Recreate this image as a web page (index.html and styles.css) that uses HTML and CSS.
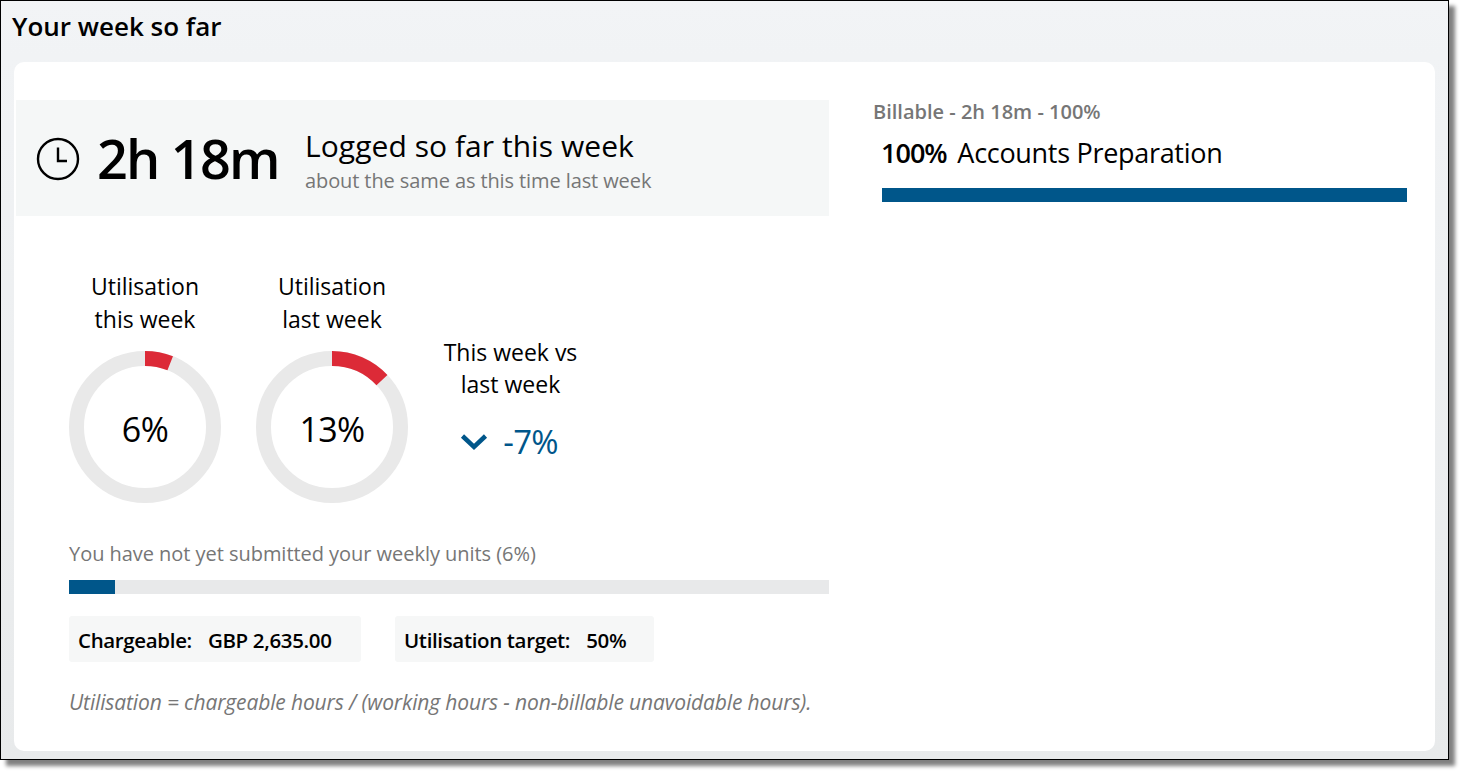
FILE: index.html
```html
<!DOCTYPE html>
<html lang="en">
<head>
    <meta charset="UTF-8">
    <title>Your week so far</title>
    <link rel="stylesheet" href="styles.css">
</head>
<body>
    <div class="frame">
        <h1 class="page-title">Your week so far</h1>
        <div class="card">
            <div class="left-col">
                <div class="hero">
                    <svg class="clock" viewBox="0 0 44 44" width="44" height="44">
                        <circle cx="22" cy="22" r="20" fill="none" stroke="#000" stroke-width="2.4"></circle>
                        <path d="M22 10.5V24H31" fill="none" stroke="#000" stroke-width="2.4"></path>
                    </svg>
                    <div class="hero-time">2h 18m</div>
                    <div class="hero-text">
                        <div class="hero-title">Logged so far this week</div>
                        <div class="hero-sub">about the same as this time last week</div>
                    </div>
                </div>

                <div class="gauges">
                    <div class="gauge">
                        <div class="gauge-label">Utilisation<br>this week</div>
                        <div class="ring">
                            <svg viewBox="0 0 152 152" width="152" height="152">
                                <circle class="ring-bg" cx="76" cy="76" r="68.5"></circle>
                                <circle class="ring-value" cx="76" cy="76" r="68.5" pathLength="100" stroke-dasharray="6 94" transform="rotate(-90 76 76)"></circle>
                            </svg>
                            <span class="ring-text">6%</span>
                        </div>
                    </div>
                    <div class="gauge">
                        <div class="gauge-label">Utilisation<br>last week</div>
                        <div class="ring">
                            <svg viewBox="0 0 152 152" width="152" height="152">
                                <circle class="ring-bg" cx="76" cy="76" r="68.5"></circle>
                                <circle class="ring-value" cx="76" cy="76" r="68.5" pathLength="100" stroke-dasharray="13 87" transform="rotate(-90 76 76)"></circle>
                            </svg>
                            <span class="ring-text">13%</span>
                        </div>
                    </div>
                    <div class="compare">
                        <div class="gauge-label">This week vs<br>last week</div>
                        <div class="compare-value">
                            <svg viewBox="0 0 28 18" width="28" height="18">
                                <path d="M2.5 3L14 14L25.5 3" fill="none" stroke="#00568a" stroke-width="4.5"></path>
                            </svg>
                            <span>-7%</span>
                        </div>
                    </div>
                </div>

                <div class="units">
                    <div class="units-label">You have not yet submitted your weekly units (6%)</div>
                    <div class="track"><div class="track-fill" style="width: 6%"></div></div>
                    <div class="chips">
                        <div class="chip chip-money"><b>Chargeable:</b><span>GBP 2,635.00</span></div>
                        <div class="chip chip-target"><b>Utilisation target:</b><span>50%</span></div>
                    </div>
                    <div class="note">Utilisation = chargeable hours / (working hours - non-billable unavoidable hours).</div>
                </div>
            </div>

            <div class="right-col">
                <div class="billable-label">Billable - 2h 18m - 100%</div>
                <div class="billable-row"><b>100%</b> Accounts Preparation</div>
                <div class="billable-bar"></div>
            </div>
        </div>
    </div>
</body>
</html>
```

FILE: styles.css
```css
html, body {
    margin: 0;
    padding: 0;
}
body {
    width: 1464px;
    height: 775px;
    background: #fff;
    font-family: "Open Sans", "Noto Sans", sans-serif;
    color: #000;
    overflow: hidden;
}
.frame {
    box-sizing: border-box;
    width: 1449px;
    height: 760px;
    padding: 0 13px;
    border: 1px solid #000;
    background: linear-gradient(#f2f4f6, #f1f3f5 55px, #e8eaeb);
    box-shadow: 6px 6px 4px #808080;
}
.page-title {
    margin: 0 0 0 -2px;
    height: 61px;
    padding-top: 8px;
    box-sizing: border-box;
    font-size: 26px;
    line-height: 34px;
    font-weight: 600;
}
.card {
    display: flex;
    box-sizing: border-box;
    width: 1421px;
    height: 689px;
    padding-top: 38px;
    padding-left: 2px;
    background: #fff;
    border-radius: 10px;
}
.left-col {
    width: 813px;
}
.right-col {
    margin-left: 44px;
    width: 534px;
}
.hero {
    display: flex;
    align-items: center;
    height: 116px;
    background: #f5f7f7;
    padding-left: 20px;
    box-sizing: border-box;
}
.clock {
    flex: none;
    margin-top: 1px;
}
.hero-time {
    margin-left: 17px;
    width: 208px;
    font-size: 54px;
    line-height: 60px;
    font-weight: 600;
    letter-spacing: -1.8px;
    white-space: nowrap;
}
.hero-text {
    margin-top: 5px;
}
.hero-title {
    font-size: 30px;
    line-height: 36px;
    letter-spacing: 0.05px;
}
.hero-sub {
    margin-top: 4px;
    font-size: 20px;
    line-height: 26px;
    color: #767676;
    letter-spacing: -0.1px;
}
.gauges {
    display: flex;
    margin-top: 54px;
    padding-left: 53px;
    height: 233px;
}
.gauge {
    width: 152px;
    margin-right: 35px;
    text-align: center;
}
.gauge-label {
    font-size: 23px;
    line-height: 33px;
    white-space: nowrap;
}
.ring {
    position: relative;
    width: 152px;
    height: 152px;
    margin-top: 15px;
}
.ring svg {
    display: block;
}
.ring-bg,
.ring-value {
    fill: none;
    stroke-width: 15;
}
.ring-bg {
    stroke: #e9e9e9;
}
.ring-value {
    stroke: #dc2a37;
}
.ring-text {
    position: absolute;
    left: 0;
    right: 0;
    top: 56px;
    font-size: 34px;
    line-height: 44px;
    letter-spacing: -0.6px;
}
.compare {
    width: 135px;
    margin-top: 66px;
    text-align: center;
}
.compare .gauge-label {
    line-height: 32px;
}
.compare-value {
    display: flex;
    justify-content: center;
    align-items: center;
    gap: 15px;
    margin-top: 20px;
    margin-left: -3px;
    font-size: 33px;
    line-height: 44px;
    color: #00568a;
    letter-spacing: -0.8px;
}
.units {
    padding-left: 53px;
    margin-top: 37px;
}
.units-label {
    font-size: 20px;
    line-height: 28px;
    color: #767676;
    letter-spacing: -0.04px;
}
.track {
    height: 14px;
    margin-top: 12px;
    background: #e8e9ea;
}
.track-fill {
    height: 100%;
    background: #00568a;
}
.chips {
    display: flex;
    gap: 34px;
    margin-top: 22px;
}
.chip {
    box-sizing: border-box;
    height: 46px;
    display: flex;
    align-items: center;
    padding: 2px 0 0 9px;
    background: #f6f7f7;
    border-radius: 3px;
    font-size: 20.5px;
    letter-spacing: -0.35px;
    white-space: nowrap;
}
.chip b,
.chip span {
    font-weight: 600;
}
.chip-money {
    width: 292px;
    gap: 16px;
}
.chip-target {
    width: 259px;
    gap: 16px;
}
.note {
    margin-top: 26px;
    font-size: 21px;
    line-height: 28px;
    font-style: italic;
    color: #767676;
    letter-spacing: -0.14px;
    white-space: nowrap;
}
.billable-label {
    font-size: 20px;
    line-height: 26px;
    margin-top: -1px;
    font-weight: 600;
    color: #767676;
}
.billable-row {
    margin-top: 10px;
    margin-left: 8px;
    font-size: 27px;
    line-height: 36px;
    letter-spacing: -0.3px;
    white-space: nowrap;
}
.billable-row b {
    font-weight: 600;
    letter-spacing: -1px;
    margin-right: 4px;
}
.billable-bar {
    height: 14px;
    margin-top: 17px;
    margin-left: 9px;
    width: 525px;
    background: #00568a;
}
```
